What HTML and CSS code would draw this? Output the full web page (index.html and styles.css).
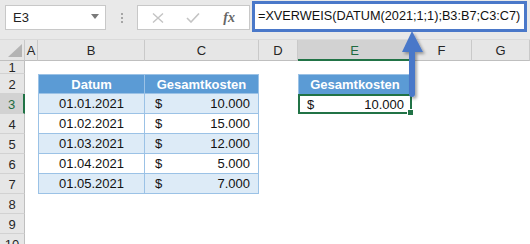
FILE: index.html
```html
<!DOCTYPE html>
<html lang="de">
<head>
  <meta charset="UTF-8" />
  <title>XVERWEIS Datum</title>
  <link rel="stylesheet" href="styles.css">
</head>
<body>
  <div class="app">
    <div class="toolbar">
      <div class="name-box">
        <span>E3</span>
        <svg class="caret" width="8" height="5" viewBox="0 0 8 5"><path d="M0 0h8L4 5z" fill="#7a7a7a"/></svg>
      </div>
      <div class="grip"><i></i><i></i><i></i></div>
      <div class="func-box">
        <svg width="12" height="10" viewBox="0 0 12 10"><path d="M1 0.5l10 9M11 0.5l-10 9" stroke="#c4c4c4" stroke-width="1.4" fill="none"/></svg>
        <svg width="14" height="10" viewBox="0 0 14 10"><path d="M1 5l4 4 8-8.5" stroke="#c4c4c4" stroke-width="1.6" fill="none"/></svg>
        <span class="fx">fx</span>
      </div>
      <div class="formula">=XVERWEIS(DATUM(2021;1;1);B3:B7;C3:C7)</div>
    </div>

    <div class="sheet">
      <div class="ch corner"><svg width="14" height="13" viewBox="0 0 14 13"><path d="M14 0v13H0z" fill="#b4b4b4"/></svg></div>
      <div class="ch">A</div><div class="ch">B</div><div class="ch">C</div><div class="ch">D</div>
      <div class="ch sel">E</div><div class="ch">F</div><div class="ch">G</div>

      <div class="rh">1</div>
      <div class="c"></div><div class="c"></div><div class="c"></div><div class="c"></div><div class="c"></div><div class="c"></div><div class="c"></div>

      <div class="rh">2</div>
      <div class="c"></div>
      <div class="c th first top">Datum</div>
      <div class="c th top">Gesamtkosten</div>
      <div class="c"></div>
      <div class="c th solo">Gesamtkosten</div>
      <div class="c"></div><div class="c"></div>

      <div class="rh sel">3</div>
      <div class="c"></div>
      <div class="c td alt first">01.01.2021</div>
      <div class="c td alt money"><span>$</span><span>10.000</span></div>
      <div class="c"></div>
      <div class="c money active"><span>$</span><span>10.000</span><b class="handle"></b></div>
      <div class="c"></div><div class="c"></div>

      <div class="rh">4</div>
      <div class="c"></div>
      <div class="c td first">01.02.2021</div>
      <div class="c td money"><span>$</span><span>15.000</span></div>
      <div class="c"></div><div class="c"></div><div class="c"></div><div class="c"></div>

      <div class="rh">5</div>
      <div class="c"></div>
      <div class="c td alt first">01.03.2021</div>
      <div class="c td alt money"><span>$</span><span>12.000</span></div>
      <div class="c"></div><div class="c"></div><div class="c"></div><div class="c"></div>

      <div class="rh">6</div>
      <div class="c"></div>
      <div class="c td first">01.04.2021</div>
      <div class="c td money"><span>$</span><span>5.000</span></div>
      <div class="c"></div><div class="c"></div><div class="c"></div><div class="c"></div>

      <div class="rh">7</div>
      <div class="c"></div>
      <div class="c td alt first">01.05.2021</div>
      <div class="c td alt money"><span>$</span><span>7.000</span></div>
      <div class="c"></div><div class="c"></div><div class="c"></div><div class="c"></div>

      <div class="rh">8</div>
      <div class="c"></div><div class="c"></div><div class="c"></div><div class="c"></div><div class="c"></div><div class="c"></div><div class="c"></div>

      <div class="rh">9</div>
      <div class="c"></div><div class="c"></div><div class="c"></div><div class="c"></div><div class="c"></div><div class="c"></div><div class="c"></div>

      <div class="rh">10</div>
      <div class="c"></div><div class="c"></div><div class="c"></div><div class="c"></div><div class="c"></div><div class="c"></div><div class="c"></div>
    </div>

    <!-- callout arrow from E3 up to the formula -->
    <svg class="arrow" width="530" height="244" viewBox="0 0 530 244">
      <defs>
        <filter id="sh" x="-50%" y="-20%" width="200%" height="140%">
          <feDropShadow dx="2" dy="2" stdDeviation="1.5" flood-color="#000" flood-opacity="0.35"/>
        </filter>
      </defs>
      <g filter="url(#sh)" fill="#4a78c9">
        <path d="M412 31L423 52H402z"/>
        <rect x="409" y="48" width="6" height="49" rx="3"/>
      </g>
    </svg>
  </div>
</body>
</html>
```

FILE: styles.css
```css
* {
  box-sizing: border-box;
}

body {
  margin: 0;
  background: #fff;
  font-family: 'Liberation Sans', Arial, sans-serif;
}

.app {
  position: relative;
  width: 530px;
  height: 244px;
  overflow: hidden;
}

/* formula bar */
.toolbar {
  height: 40px;
  display: flex;
  align-items: flex-start;
  background: #e9e9e9;
  border-bottom: 1px solid #dadada;
}

.name-box {
  margin: 5px 0 0 5px;
  width: 101px;
  height: 25px;
  background: #fff;
  border: 1px solid #c8c8c8;
  display: flex;
  align-items: center;
  justify-content: space-between;
  padding: 0 6px 0 7px;
  font-size: 13px;
  color: #222;
}

.caret {
  margin-top: -3px;
}

.grip {
  width: 31px;
  height: 35px;
  display: flex;
  flex-direction: column;
  align-items: center;
  justify-content: center;
  gap: 2px;
}

.grip i {
  width: 2px;
  height: 2px;
  background: #a6a6a6;
}

.func-box {
  margin-top: 5px;
  width: 113px;
  height: 25px;
  background: #fff;
  border: 1px solid #c8c8c8;
  display: flex;
  align-items: center;
  padding: 0 14px 0 14px;
  gap: 22px;
}

.fx {
  margin-left: auto;
  font-family: 'Liberation Serif', serif;
  font-style: italic;
  font-weight: bold;
  font-size: 14px;
  color: #666;
}

.formula {
  margin: 1px 0 0 2px;
  width: 275px;
  height: 31px;
  background: #fff;
  border: 3px solid #4a78c9;
  padding: 0 0 0 3px;
  font-size: 12.7px;
  line-height: 25px;
  color: #111;
  white-space: nowrap;
}

/* grid */
.sheet {
  display: grid;
  grid-template-columns: 25px 13px 107px 114px 39px 114px 60px 58px;
  grid-template-rows: 21px 13px repeat(9, 20px);
  font-size: 13px;
}

.ch,
.rh {
  background: #e6e6e6;
  color: #262626;
  display: flex;
  align-items: center;
  justify-content: center;
}

.ch {
  border-right: 1px solid #c9c9c9;
  border-bottom: 1px solid #bfbfbf;
  padding-top: 1px;
}

.ch.corner {
  align-items: flex-end;
  justify-content: flex-end;
  padding: 0 2px 3px 0;
}

.rh {
  border-right: 1px solid #bfbfbf;
  border-bottom: 1px solid #d2d2d2;
  line-height: 1;
  padding-top: 1px;
}

.ch.sel {
  background: #d2d2d2;
  color: #1e6b40;
  border-bottom: 2px solid #217346;
}

.rh.sel {
  background: #d2d2d2;
  color: #1e6b40;
  border-right: 2px solid #217346;
}

.c {
  display: flex;
  align-items: center;
  justify-content: center;
  color: #111;
  position: relative;
}

.th {
  background: #5b9bd5;
  color: #fff;
  font-weight: bold;
  border-right: 1px solid #9bc2e6;
}

.th.first,
.td.first {
  border-left: 1px solid #9bc2e6;
}

.th.top {
  border-top: 1px solid #9bc2e6;
}

.th.solo {
  border: 1px solid #9bc2e6;
  border-bottom: none;
}

.td {
  background: #fff;
  border-right: 1px solid #9bc2e6;
  border-bottom: 1px solid #9bc2e6;
  border-top: 1px solid #9bc2e6;
  margin-top: -1px;
}

.td.alt {
  background: #ddebf7;
}

.money {
  justify-content: space-between;
  padding: 0 8px 0 10px;
}

.active {
  border: 2px solid #217346;
  padding: 0 6px 0 7px;
}

.handle {
  position: absolute;
  right: -4px;
  bottom: -4px;
  width: 5px;
  height: 5px;
  background: #217346;
  border: 1px solid #fff;
  box-sizing: content-box;
}

.arrow {
  position: absolute;
  left: 0;
  top: 0;
  pointer-events: none;
}
```
